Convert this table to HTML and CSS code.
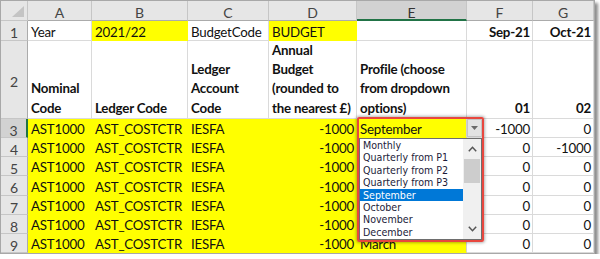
FILE: index.html
```html
<!DOCTYPE html>
<html>
<head>
<meta charset="utf-8">
<link rel="stylesheet" href="styles.css">
</head>
<body>
<div class="frame">
  <div class="sheet">
    <div class="h corner"><svg width="13" height="12" viewBox="0 0 13 12"><polygon points="12,0 12,11 0,11" fill="#c4c4c4"/></svg></div>
    <div class="h col">A</div>
    <div class="h col">B</div>
    <div class="h col">C</div>
    <div class="h col">D</div>
    <div class="h col sel-col">E</div>
    <div class="h col">F</div>
    <div class="h col">G</div>

    <div class="h rn">1</div>
    <div class="c">Year</div>
    <div class="c y">2021/22</div>
    <div class="c">BudgetCode</div>
    <div class="c y">BUDGET</div>
    <div class="c"></div>
    <div class="c b r">Sep-21</div>
    <div class="c b r">Oct-21</div>

    <div class="h rn">2</div>
    <div class="c b w">Nominal<br>Code</div>
    <div class="c b w">Ledger Code</div>
    <div class="c b w">Ledger<br>Account<br>Code</div>
    <div class="c b w">Annual<br>Budget<br>(rounded to<br>the nearest £)</div>
    <div class="c b w">Profile (choose<br>from dropdown<br>options)</div>
    <div class="c b w r">01</div>
    <div class="c b w r">02</div>

    <div class="h rn sel-row">3</div>
    <div class="c y">AST1000</div><div class="c y">AST_COSTCTR</div><div class="c y">IESFA</div><div class="c y r">-1000</div><div class="c y ye">September</div><div class="c r">-1000</div><div class="c r">0</div>

    <div class="h rn">4</div>
    <div class="c y">AST1000</div><div class="c y">AST_COSTCTR</div><div class="c y">IESFA</div><div class="c y r">-1000</div><div class="c y ye"></div><div class="c r">0</div><div class="c r">-1000</div>

    <div class="h rn">5</div>
    <div class="c y">AST1000</div><div class="c y">AST_COSTCTR</div><div class="c y">IESFA</div><div class="c y r">-1000</div><div class="c y ye"></div><div class="c r">0</div><div class="c r">0</div>

    <div class="h rn">6</div>
    <div class="c y">AST1000</div><div class="c y">AST_COSTCTR</div><div class="c y">IESFA</div><div class="c y r">-1000</div><div class="c y ye"></div><div class="c r">0</div><div class="c r">0</div>

    <div class="h rn">7</div>
    <div class="c y">AST1000</div><div class="c y">AST_COSTCTR</div><div class="c y">IESFA</div><div class="c y r">-1000</div><div class="c y ye"></div><div class="c r">0</div><div class="c r">0</div>

    <div class="h rn">8</div>
    <div class="c y">AST1000</div><div class="c y">AST_COSTCTR</div><div class="c y">IESFA</div><div class="c y r">-1000</div><div class="c y ye"></div><div class="c r">0</div><div class="c r">0</div>

    <div class="h rn">9</div>
    <div class="c y">AST1000</div><div class="c y">AST_COSTCTR</div><div class="c y">IESFA</div><div class="c y r">-1000</div><div class="c y ye">March</div><div class="c r">0</div><div class="c r">0</div>

    <div class="dd-btn"><svg width="7" height="4" viewBox="0 0 7 4"><polygon points="0,0 7,0 3.5,4" fill="#6a6a6a"/></svg></div>
    <div class="dd-list">
      <div class="items">
        <div class="item">Monthly</div>
        <div class="item">Quarterly from P1</div>
        <div class="item">Quarterly from P2</div>
        <div class="item">Quarterly from P3</div>
        <div class="item on">September</div>
        <div class="item">October</div>
        <div class="item">November</div>
        <div class="item">December</div>
      </div>
      <div class="scroll">
        <div class="arrow"><svg width="9" height="6" viewBox="0 0 9 6"><polyline points="0.8,5.2 4.5,1.3 8.2,5.2" fill="none" stroke="#555" stroke-width="1.5"/></svg></div>
        <div class="track"><div class="thumb"></div></div>
        <div class="arrow"><svg width="9" height="6" viewBox="0 0 9 6"><polyline points="0.8,0.8 4.5,4.7 8.2,0.8" fill="none" stroke="#555" stroke-width="1.5"/></svg></div>
      </div>
    </div>
    <div class="dd-box"></div>
  </div>
</div>
</body>
</html>
```

FILE: styles.css
```css
body {
  margin: 0;
  background: #ffffff;
}

.frame {
  width: 593px;
  height: 252px;
  border: 1px solid #a8a8a8;
  box-shadow: 3px 3px 3px rgba(0, 0, 0, 0.45);
  overflow: hidden;
  background: #ffffff;
}

.sheet {
  position: relative;
  display: grid;
  grid-template-columns: 27px 64px 96px 81px 88px 110px 66px 61px;
  grid-template-rows: 20px 20px 78px 19px 19px 19px 20px 19px 19px 19px;
  font-family: Lato, "Liberation Sans", sans-serif;
  font-size: 13.3px;
  letter-spacing: -0.2px;
  color: #111111;
}

.h {
  box-sizing: border-box;
  background: #e6e6e6;
  color: #444444;
  border-right: 1px solid #c6c6c6;
  border-bottom: 1px solid #c6c6c6;
  display: flex;
  align-items: center;
  justify-content: center;
  font-size: 14px;
  letter-spacing: 0;
}

.col,
.rn {
  padding-top: 4px;
}

.corner {
  align-items: flex-end;
  justify-content: flex-end;
  padding: 0 2px 2px 0;
}

.corner svg {
  display: block;
}

.col {
  border-bottom-color: #ababab;
}

.sel-col {
  background: #d2d2d2;
  color: #333333;
  border-bottom: 2px solid #217346;
}

.rn {
  border-right-color: #ababab;
}

.sel-row {
  background: #d2d2d2;
  border-right: 2px solid #217346;
}

.c {
  box-sizing: border-box;
  border-right: 1px solid #dadada;
  border-bottom: 1px solid #dadada;
  display: flex;
  align-items: flex-end;
  padding: 0 2px 0 3px;
  line-height: 15px;
  white-space: nowrap;
  overflow: hidden;
}

.b {
  font-weight: 700;
}

.r {
  justify-content: flex-end;
}

.w {
  line-height: 19.3px;
}

.y {
  background: #ffff00;
  border-right-color: #ffff00;
  border-bottom-color: #ffff00;
}

.ye {
  border-right-color: #d0d0d0;
}

.dd-box {
  position: absolute;
  left: 356px;
  top: 116px;
  width: 127px;
  height: 125px;
  box-sizing: border-box;
  border: 2px solid #e8473f;
  border-radius: 2px;
  box-shadow: 0 0 3px 1px rgba(0, 0, 0, 0.3);
  z-index: 3;
}

.dd-btn {
  position: absolute;
  left: 466px;
  top: 118px;
  width: 15px;
  height: 18px;
  box-sizing: border-box;
  background: #e3e3e3;
  border: 1px solid #c4c4c4;
  display: flex;
  align-items: center;
  justify-content: center;
  z-index: 2;
}

.dd-list {
  position: absolute;
  left: 358px;
  top: 137px;
  width: 123px;
  height: 102px;
  box-sizing: border-box;
  border: 1px solid #6e6e6e;
  background: #ffffff;
  display: flex;
  z-index: 2;
}

.items {
  flex: 1;
  font-family: "DejaVu Sans Condensed", "DejaVu Sans", sans-serif;
  font-stretch: condensed;
  font-size: 10.6px;
  letter-spacing: 0;
  color: #1c1c3a;
}

.item {
  height: 12.4px;
  line-height: 12.4px;
  padding-left: 3px;
  white-space: nowrap;
}

.item.on {
  background: #0078d7;
  color: #ffffff;
}

.scroll {
  width: 18px;
  display: flex;
  flex-direction: column;
  background: #f0f0f0;
}

.arrow {
  height: 20px;
  display: flex;
  align-items: center;
  justify-content: center;
}

.arrow svg {
  display: block;
}

.track {
  flex: 1;
}

.thumb {
  height: 24px;
  margin: 0 1px;
  background: #cdcdcd;
}
```
